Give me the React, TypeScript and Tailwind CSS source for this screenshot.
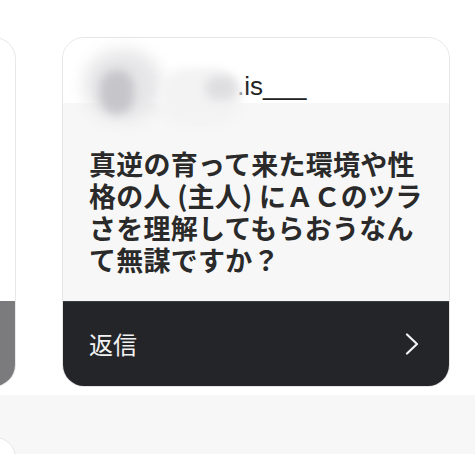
import React from "react";

export default function App() {
  return (
    <div className="relative w-[475px] h-[454px] overflow-hidden bg-white">
      <div className="flex gap-[46px] ml-[-371px] pt-[37px]">
        {/* left partial card */}
        <div className="flex flex-col shrink-0 w-[387px] h-[350px] rounded-[22px] border border-[#e8e8e8] overflow-hidden bg-white">
          <div className="flex-1" />
          <div className="h-[85px] bg-[#7b7b7d]" />
        </div>

        {/* main card */}
        <div className="flex flex-col shrink-0 w-[388px] h-[350px] rounded-[22px] border border-[#e6e6e6] overflow-hidden bg-white">
          <div className="relative h-[65px] bg-white pt-[33px] pl-[26px] flex">
            <span className="inline-block w-[148px]" />
            <span
              className="text-[26px] leading-[30px] text-[#222]"
              style={{ fontFamily: '"Liberation Sans", Arial, sans-serif' }}
            >
              .is___
            </span>
          </div>
          <div
            className="h-[198px] bg-[#f7f7f7] px-[26px] pt-[45px] text-[27px] leading-[32px] tracking-[0.25px] font-bold text-[#2a2a2a]"
            style={{ fontFamily: '"Noto Sans CJK JP", "Noto Sans", sans-serif' }}
          >
            真逆の育って来た環境や性
            <br />
            格の人 (主人) にＡＣのツラ
            <br />
            さを理解してもらおうなん
            <br />
            て無謀ですか？
          </div>
          <div className="flex-1 bg-[#232529] border-t border-[#3a3c40] flex items-center justify-between pl-[26px] pr-[30px]">
            <span
              className="text-[24px] leading-[30px] text-[#f2f2f2]"
              style={{ fontFamily: '"Noto Sans CJK JP", "Noto Sans", sans-serif' }}
            >
              返信
            </span>
            <svg width="14" height="22" viewBox="0 0 14 22" fill="none">
              <path d="M2 1.5 L12 11 L2 20.5" stroke="#f2f2f2" strokeWidth="2.2" strokeLinecap="round" strokeLinejoin="round" />
            </svg>
          </div>
        </div>
      </div>

      {/* blurred name overlays */}
      <div className="absolute left-[84px] top-[50px] w-[78px] h-[70px] rounded-full bg-[#e6e6e8] blur-[8px]" />
      <div className="absolute left-[100px] top-[70px] w-[34px] h-[44px] rounded-full bg-[#c6c6ca] blur-[5px]" />
      <div className="absolute left-[158px] top-[68px] w-[84px] h-[58px] rounded-full bg-[#f3f3f4] blur-[4px]" />
      <div className="absolute left-[205px] top-[76px] w-[32px] h-[24px] rounded-full bg-[#dedee0] blur-[5px]" />

      {/* bottom gray band */}
      <div className="relative mt-[8px] h-[59px] bg-[#f7f7f7]">
        <div className="absolute left-[-26px] top-[42px] w-[42px] h-[42px] rounded-full bg-white border border-[#e6e6e6]" />
      </div>
    </div>
  );
}
